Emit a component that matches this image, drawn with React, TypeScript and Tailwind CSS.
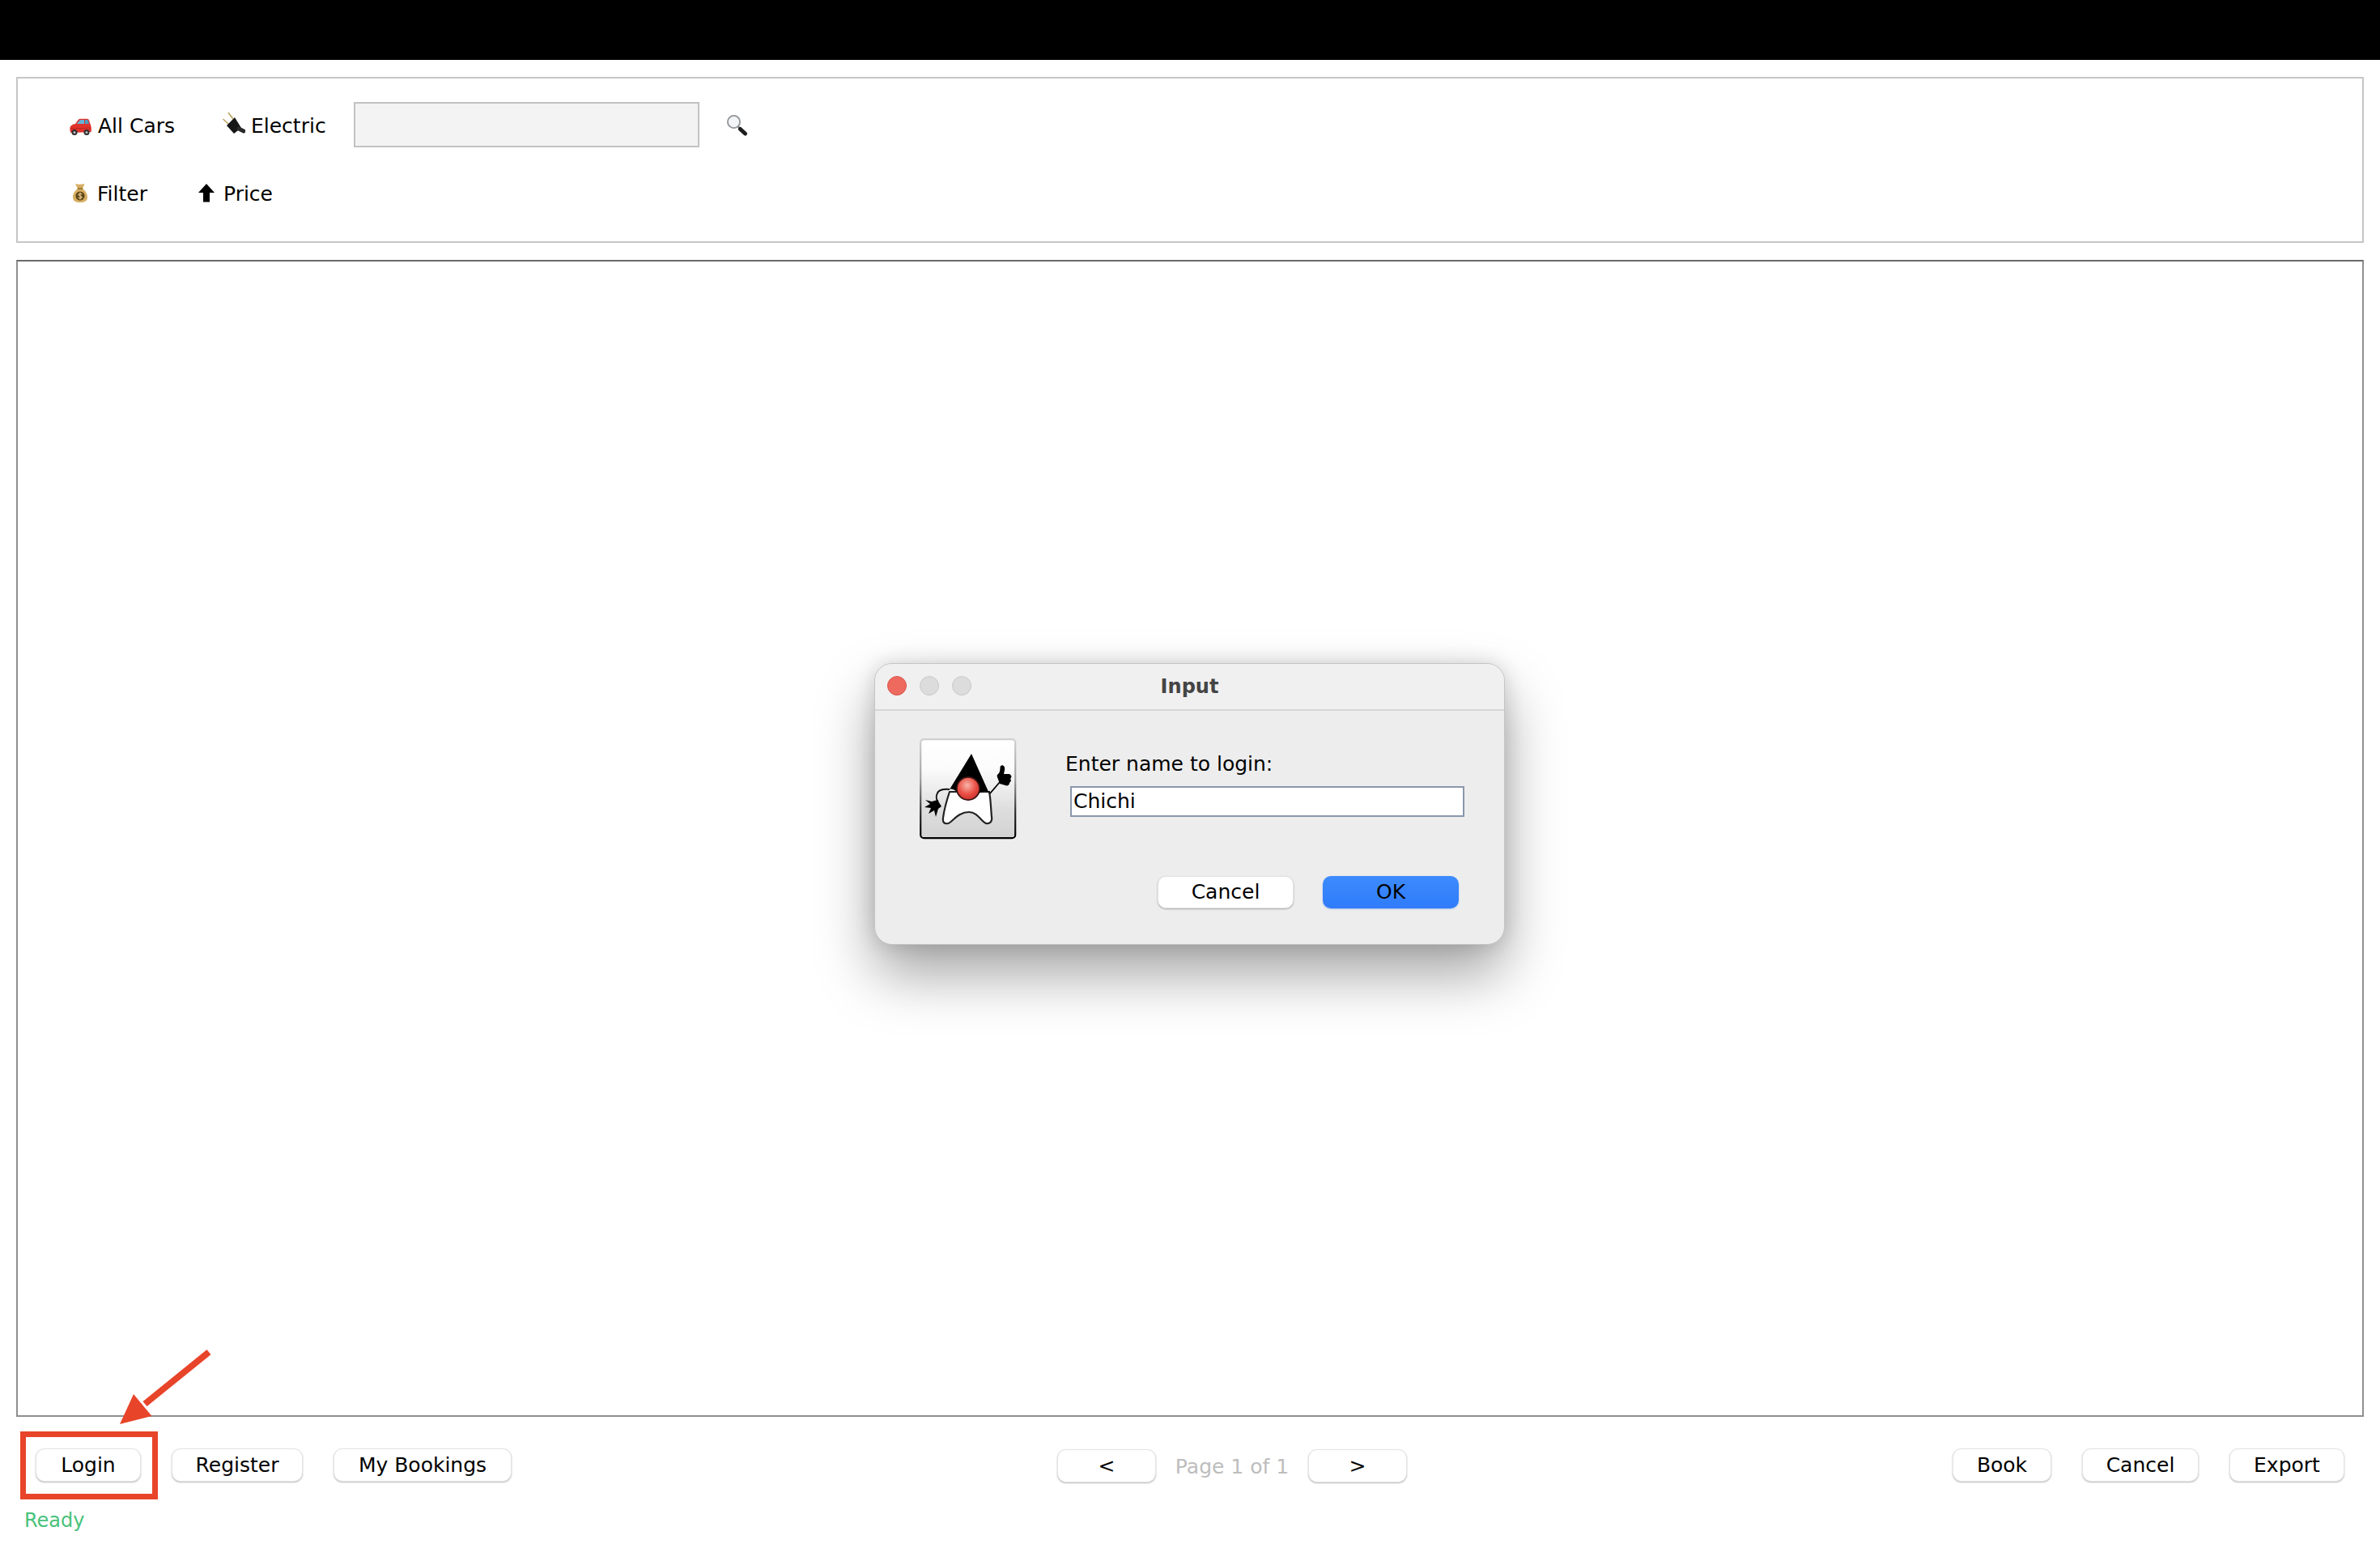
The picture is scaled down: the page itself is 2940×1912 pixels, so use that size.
const FONT = "font-['DejaVu_Sans','Liberation_Sans',sans-serif]";

function Car() {
  return (
    <svg width="27" height="21" viewBox="0 0 27 21" className="block">
      <path d="M0.5 11.5 C1 9 4 7.5 7 7 L11 1.6 C11.5 1 12.5 0.8 14 0.8 L21.5 0.8 C23 0.8 24 2 24.5 4 L26.5 10 C27 13 27 15 26.5 17 L1.5 18 C0.5 16 0.2 14 0.5 11.5 Z" fill="#e1322b" />
      <path d="M8.6 7 L12.5 2.6 C13 2.2 13.5 2 14.5 2 L18 2 L18 7 Z" fill="#66b3d6" />
      <path d="M19 2 L21.5 2 C22.5 2 23 3 23.4 4.4 L24 7 L19 7 Z" fill="#4d9cc0" />
      <path d="M1 13 L26 12" stroke="#b3211c" strokeWidth="0.8" fill="none" />
      <circle cx="6" cy="17.5" r="3.5" fill="#2e2e2e" />
      <circle cx="6" cy="17.5" r="1.5" fill="#bdbdbd" />
      <circle cx="21" cy="17.5" r="3.5" fill="#2e2e2e" />
      <circle cx="21" cy="17.5" r="1.5" fill="#bdbdbd" />
    </svg>
  );
}

function Plug() {
  return (
    <svg width="28" height="29" viewBox="0 0 28 29" className="block">
      <path d="M7 1 L13 9" stroke="#b9a25a" strokeWidth="1.5" />
      <path d="M0.5 9 L7 15" stroke="#b9a25a" strokeWidth="1.5" />
      <path d="M5 17 L15 7 L23 20 L14 27 Z" fill="#161616" />
      <path d="M20 21 L26 24" stroke="#2a2a2a" strokeWidth="5" strokeLinecap="round" />
    </svg>
  );
}

function Magnifier() {
  return (
    <svg width="28" height="27" viewBox="0 0 28 27" className="block">
      <circle cx="9.5" cy="9.5" r="7.6" fill="#f3f4f5" stroke="#8f9497" strokeWidth="1.8" />
      <path d="M15 15.5 L17 17.5" stroke="#7a7a7a" strokeWidth="2.4" />
      <path d="M17.5 18.5 L23.5 24" stroke="#1e1e1e" strokeWidth="5" strokeLinecap="round" />
    </svg>
  );
}

function Bag() {
  return (
    <svg width="18" height="24" viewBox="0 0 18 24" className="block">
      <path d="M3 1 C6 2 11 2 14.5 1 L12 7 C15.5 9.5 18 13.5 18 17.5 C18 22.5 14 24 9 24 C4 24 0 22.5 0 17.5 C0 13.5 2.5 9.5 6 7 Z" fill="#d7ae62" />
      <path d="M5.8 7 L12.2 7" stroke="#86642a" strokeWidth="1.4" />
      <circle cx="9" cy="16" r="5.6" fill="#5f4519" />
      <path d="M11.3 13.8 C10.4 12.9 7 12.9 6.8 14.6 C6.7 16.2 11.2 15.9 11.2 17.6 C11 19.2 7.4 19.2 6.5 18 M9 11.6 L9 20.4" stroke="#eccd8d" strokeWidth="1.1" fill="none" />
    </svg>
  );
}

function ArrowUp() {
  return (
    <svg width="20" height="23" viewBox="0 0 20 23" className="block">
      <path d="M10 0 L20 11 L14 11 L14 22.5 L6 22.5 L6 11 L0 11 Z" fill="#000" />
    </svg>
  );
}

function Duke() {
  return (
    <svg width="120" height="125" viewBox="0 0 120 125" className="block">
      <defs>
        <linearGradient id="bg" x1="0" y1="0" x2="0" y2="1">
          <stop offset="0" stopColor="#ffffff" />
          <stop offset="0.3" stopColor="#fbfbfb" />
          <stop offset="0.7" stopColor="#dedede" />
          <stop offset="1" stopColor="#d2d2d2" />
        </linearGradient>
        <linearGradient id="bd" x1="0" y1="0" x2="0" y2="1">
          <stop offset="0" stopColor="#d0d0d0" />
          <stop offset="0.4" stopColor="#a0a0a0" />
          <stop offset="0.75" stopColor="#2a2a2a" />
          <stop offset="1" stopColor="#000000" />
        </linearGradient>
        <radialGradient id="nose" cx="0.45" cy="0.35" r="0.7">
          <stop offset="0" stopColor="#f7b3a8" />
          <stop offset="0.6" stopColor="#ea4f45" />
          <stop offset="1" stopColor="#c9302c" />
        </radialGradient>
      </defs>
      <rect x="1.2" y="1.2" width="117" height="122" rx="4" fill="url(#bg)" stroke="url(#bd)" strokeWidth="2.2" />
      <path d="M37 66 C33 78 30 90 29 98 C28 104 31 106 35 105 C40 104 47 91 61 91 C72 91 76 103 82 105 C87 106 90 102 89 97 C88 88 88 76 86 66 Z" fill="#fff" stroke="#222" strokeWidth="2.2" />
      <path d="M64 19 L86 68 C78 60 72 72 60 74 C48 72 44 60 37 63 Z" fill="#000" />
      <circle cx="60" cy="62" r="15" fill="#3a1412" />
      <circle cx="60" cy="62" r="13.2" fill="url(#nose)" />
      <path d="M37 63 C28 62 22 64 21 70 C20 74 21 76 23 78" stroke="#111" strokeWidth="1.8" fill="none" />
      <path d="M22 76 L15 78 L7 76 L13 81 L6 85 L14 86 L11 93 L18 89 L20 97 L23 87 L27 84 Z" fill="#000" />
      <path d="M87 68 L99 54" stroke="#000" strokeWidth="1.8" fill="none" />
      <path d="M99 56 L96 48 C95 45 97 44 98 43 C100 40 99 36 100 34 C103 32 106 35 105 39 L104 44 L111 44 C114 46 114 48 112 50 C114 52 112 54 111 55 C111 58 108 59 106 58 Z" fill="#000" />
    </svg>
  );
}

function Btn({ w, children }: { w: string; children: React.ReactNode }) {
  return (
    <button className={`${w} h-[41px] flex items-center justify-center bg-white rounded-[11px] border border-[#e4e4e4] shadow-[0_1px_2px_rgba(0,0,0,0.28)] text-[25px] text-black`}>
      {children}
    </button>
  );
}

export default function App() {
  return (
    <div className={`relative w-[2940px] h-[1912px] bg-white overflow-hidden text-black ${FONT}`}>
      <div className="h-[74px] bg-black" />

      <div className="px-[20px] pt-[21px]">
        <div className="w-[2900px] h-[205px] border-2 border-[#c6c6c6] pl-[64px] pt-[29px] flex flex-col gap-[28px]">
          <div className="flex items-center h-[56px]">
            <div className="mt-[5px]">
              <Car />
            </div>
            <span className="w-[96px] ml-[8px] pt-[4px] text-[25px] whitespace-nowrap">All Cars</span>
            <div className="ml-[58px] -mt-[3px]">
              <Plug />
            </div>
            <span className="w-[91px] ml-[7px] pt-[4px] text-[25px] whitespace-nowrap">Electric</span>
            <div className="w-[427px] h-[56px] ml-[36px] bg-[#f3f3f3] border-2 border-[#c2c2c2]" />
            <div className="ml-[33px]">
              <Magnifier />
            </div>
          </div>
          <div className="flex items-center h-[56px]">
            <div className="ml-[4px]">
              <Bag />
            </div>
            <span className="w-[65px] ml-[12px] pt-[4px] text-[25px] whitespace-nowrap">Filter</span>
            <div className="ml-[60px]">
              <ArrowUp />
            </div>
            <span className="ml-[11px] pt-[4px] text-[25px] whitespace-nowrap">Price</span>
          </div>
        </div>

        <div className="w-[2900px] h-[1429px] mt-[21px] border-2 border-[#8f8f8f] border-t-[#6a6a6a]" />

        <div className="pl-[24px] pr-[24px] pt-[39px] flex justify-between items-start">
          <div className="flex gap-[38px]">
            <Btn w="w-[130px]">Login</Btn>
            <Btn w="w-[162px]">Register</Btn>
            <Btn w="w-[220px]">My Bookings</Btn>
          </div>
          <div className="flex items-center">
            <Btn w="w-[122px]">&lt;</Btn>
            <span className="w-[188px] pt-[2px] text-center text-[25px] text-[#bdbdbd] leading-[41px]">Page 1 of 1</span>
            <Btn w="w-[122px]">&gt;</Btn>
          </div>
          <div className="flex gap-[38px]">
            <Btn w="w-[122px]">Book</Btn>
            <Btn w="w-[144px]">Cancel</Btn>
            <Btn w="w-[142px]">Export</Btn>
          </div>
        </div>

        <div className="pl-[10px] mt-[31px] text-[24px] leading-[30px] text-[#48c27a]">Ready</div>
      </div>

      {/* Annotation over the page */}
      <div className="absolute left-[25px] top-[1768px] w-[170px] h-[84px] border-[7px] border-[#e8442a]" />
      <svg className="absolute left-[141px] top-[1659px]" width="130" height="105" viewBox="0 0 130 105">
        <path d="M117 11 L38 75" stroke="#e8442a" strokeWidth="8" />
        <path d="M7 100 L24 63 L46.5 90 Z" fill="#e8442a" />
      </svg>

      {/* Modal dialog */}
      <div className="absolute left-[1080px] top-[819px] w-[779px] h-[348px] rounded-[22px] bg-[#ededed] border border-[#c4c4c4] shadow-[0_36px_70px_rgba(0,0,0,0.36),0_0_24px_rgba(0,0,0,0.14)] overflow-hidden">
        <div className="relative h-[58px] bg-[#f0f0f0] border-b-2 border-[#d6d6d6] flex items-center justify-center">
          <div className="absolute left-[15px] top-[15px] flex gap-[16px]">
            <div className="w-[24px] h-[24px] rounded-full bg-[#ee6a5f] border border-[#d9534a]" />
            <div className="w-[24px] h-[24px] rounded-full bg-[#dcdcdc] border border-[#c8c8c8]" />
            <div className="w-[24px] h-[24px] rounded-full bg-[#dcdcdc] border border-[#c8c8c8]" />
          </div>
          <span className="text-[24px] font-bold text-[#444]">Input</span>
        </div>
        <div className="flex pl-[55px] pt-[34px]">
          <Duke />
          <div className="ml-[60px] flex flex-col">
            <span className="text-[25px] leading-[32px] mt-[16px] whitespace-nowrap">Enter name to login:</span>
            <div className="ml-[6px] mt-[11px] w-[487px] h-[38px] bg-white border-2 border-[#8a97ab] pl-[2px] text-[25px] leading-[34px]">Chichi</div>
          </div>
        </div>
        <div className="flex justify-end gap-[36px] pr-[56px] mt-[45px]">
          <button className="w-[168px] h-[40px] bg-white rounded-[10px] border border-[#e2e2e2] shadow-[0_1px_2px_rgba(0,0,0,0.3)] text-[25px]">Cancel</button>
          <button className="w-[168px] h-[40px] rounded-[10px] bg-gradient-to-b from-[#3d8bfd] to-[#2f7bfa] shadow-[0_1px_2px_rgba(0,80,220,0.3)] text-[25px]">OK</button>
        </div>
      </div>
    </div>
  );
}
